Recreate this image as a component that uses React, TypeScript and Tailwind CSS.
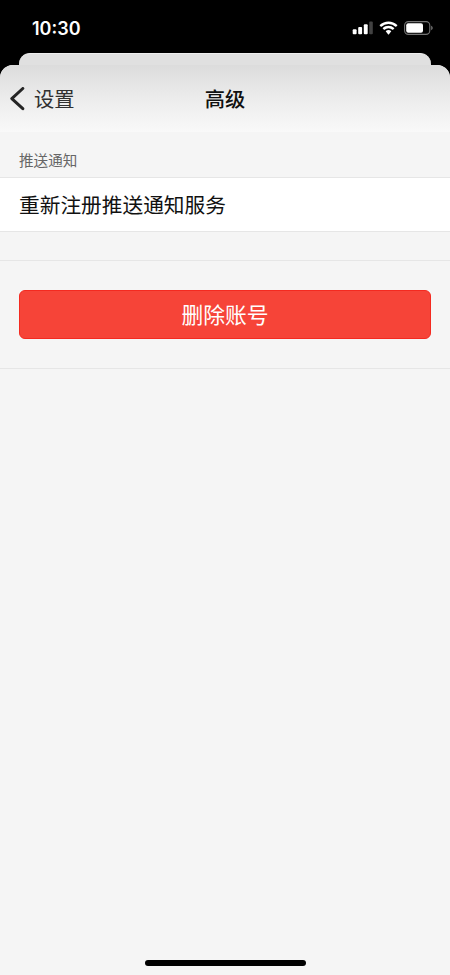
type SettingsSectionProps = {
  title: string;
  items: string[];
};

function StatusBar() {
  return (
    <div className="flex h-[53px] items-start justify-between bg-black pl-[32px] pr-[17px] pt-[15px] text-white">
      <span className="pt-px font-['Inter',sans-serif] text-[18px] font-semibold leading-[26px]">
        10:30
      </span>
      <div className="flex h-[26px] items-center">
        <svg width="21" height="14" viewBox="0 0 21 14" fill="currentColor">
          <rect x="0.7" y="8.2" width="3.9" height="5" rx="1" />
          <rect x="6.2" y="6" width="3.9" height="7.2" rx="1" />
          <rect x="11.8" y="3.2" width="3.9" height="10" rx="1" />
          <rect x="17.2" y="0.5" width="3.6" height="12.7" rx="1" fill="#424242" />
        </svg>
        <svg className="ml-[6px]" width="19" height="14" viewBox="0 0 19 14" fill="currentColor">
          <path d="M9.5.4C6.1.4 3 1.7.7 3.9c-.2.2-.2.4 0 .6l1.2 1.2c.2.2.4.2.6 0A10 10 0 0 1 9.5 3a10 10 0 0 1 7 2.7c.2.2.4.2.6 0l1.2-1.2c.2-.2.2-.4 0-.6A12.7 12.7 0 0 0 9.5.4Z" />
          <path d="M9.5 4.8c-2.2 0-4.2.8-5.7 2.2-.2.2-.2.4 0 .6L5 8.8c.2.2.4.2.6 0a5.8 5.8 0 0 1 7.8 0c.2.2.4.2.6 0l1.2-1.2c.2-.2.2-.4 0-.6a8.4 8.4 0 0 0-5.7-2.2Z" />
          <path d="M9.5 9c-1 0-1.9.3-2.6.9-.2.2-.2.4 0 .6l2.3 2.9c.2.2.4.2.6 0l2.3-2.9c.2-.2.2-.4 0-.6A4.2 4.2 0 0 0 9.5 9Z" />
        </svg>
        <svg className="ml-[6px]" width="29" height="14" viewBox="0 0 29 14">
          <rect x="0.6" y="0.6" width="25.2" height="12.8" rx="3.8" fill="none" stroke="#757575" strokeWidth="1.1" />
          <rect x="2.2" y="2.3" width="16.8" height="9.4" rx="2" fill="currentColor" />
          <path d="M27.2 4.8c.9.4 1.5 1.2 1.5 2.2s-.6 1.8-1.5 2.2Z" fill="#757575" />
        </svg>
      </div>
    </div>
  );
}

function NavHeader() {
  return (
    <header className="grid h-[67px] grid-cols-[1fr_auto_1fr] items-center rounded-t-[13px] bg-linear-to-b from-[#dcdcdc] via-[#ececec] to-[#f9f9f9] text-[20.3px] leading-[30px]">
      <button className="flex items-center pl-[9px] text-[#303030]">
        <svg width="16" height="24" viewBox="0 0 16 24" fill="none" stroke="#252525" strokeWidth="3" strokeLinecap="round" strokeLinejoin="round">
          <path d="M13.8 1.5 2.8 11.6l11 10.1" />
        </svg>
        <span className="-mt-px ml-[9px] font-normal">设置</span>
      </button>
      <h1 className="-mt-px font-medium">高级</h1>
    </header>
  );
}

function SettingsSection({ title, items }: SettingsSectionProps) {
  return (
    <section>
      <h2 className="flex h-[45px] items-center pl-[19px] pt-[10px] text-[14.6px] font-normal text-[#666]">
        {title}
      </h2>
      <ul className="border-y border-[#e6e6e6] bg-white">
        {items.map((item) => (
          <li key={item} className="flex h-[53px] items-center pl-[19px] text-[20.7px] font-normal">
            {item}
          </li>
        ))}
      </ul>
    </section>
  );
}

export default function App() {
  return (
    <div className="flex h-[975px] w-[450px] flex-col overflow-hidden bg-black font-['Noto_Sans_CJK_SC',sans-serif] text-[#111]">
      <StatusBar />
      <div className="mx-[19px] h-[12px] shrink-0 rounded-t-[11px] border-t border-[#eeeeee] bg-[#e0e0e0]" />
      <main className="flex flex-1 flex-col rounded-t-[13px] bg-[#f5f5f5]">
        <NavHeader />
        <SettingsSection title="推送通知" items={["重新注册推送通知服务"]} />
        <div className="mt-[28px] border-y border-[#e6e6e6] px-[19px] py-[29px]">
          <button className="flex h-[49px] w-full items-center justify-center rounded-[6px] border border-[#f42a20] bg-[#f64438] pb-px text-[21.8px] text-white">
            删除账号
          </button>
        </div>
        <div className="mx-auto mb-[9px] mt-auto h-[6px] w-[161px] rounded-full bg-black" />
      </main>
    </div>
  );
}
